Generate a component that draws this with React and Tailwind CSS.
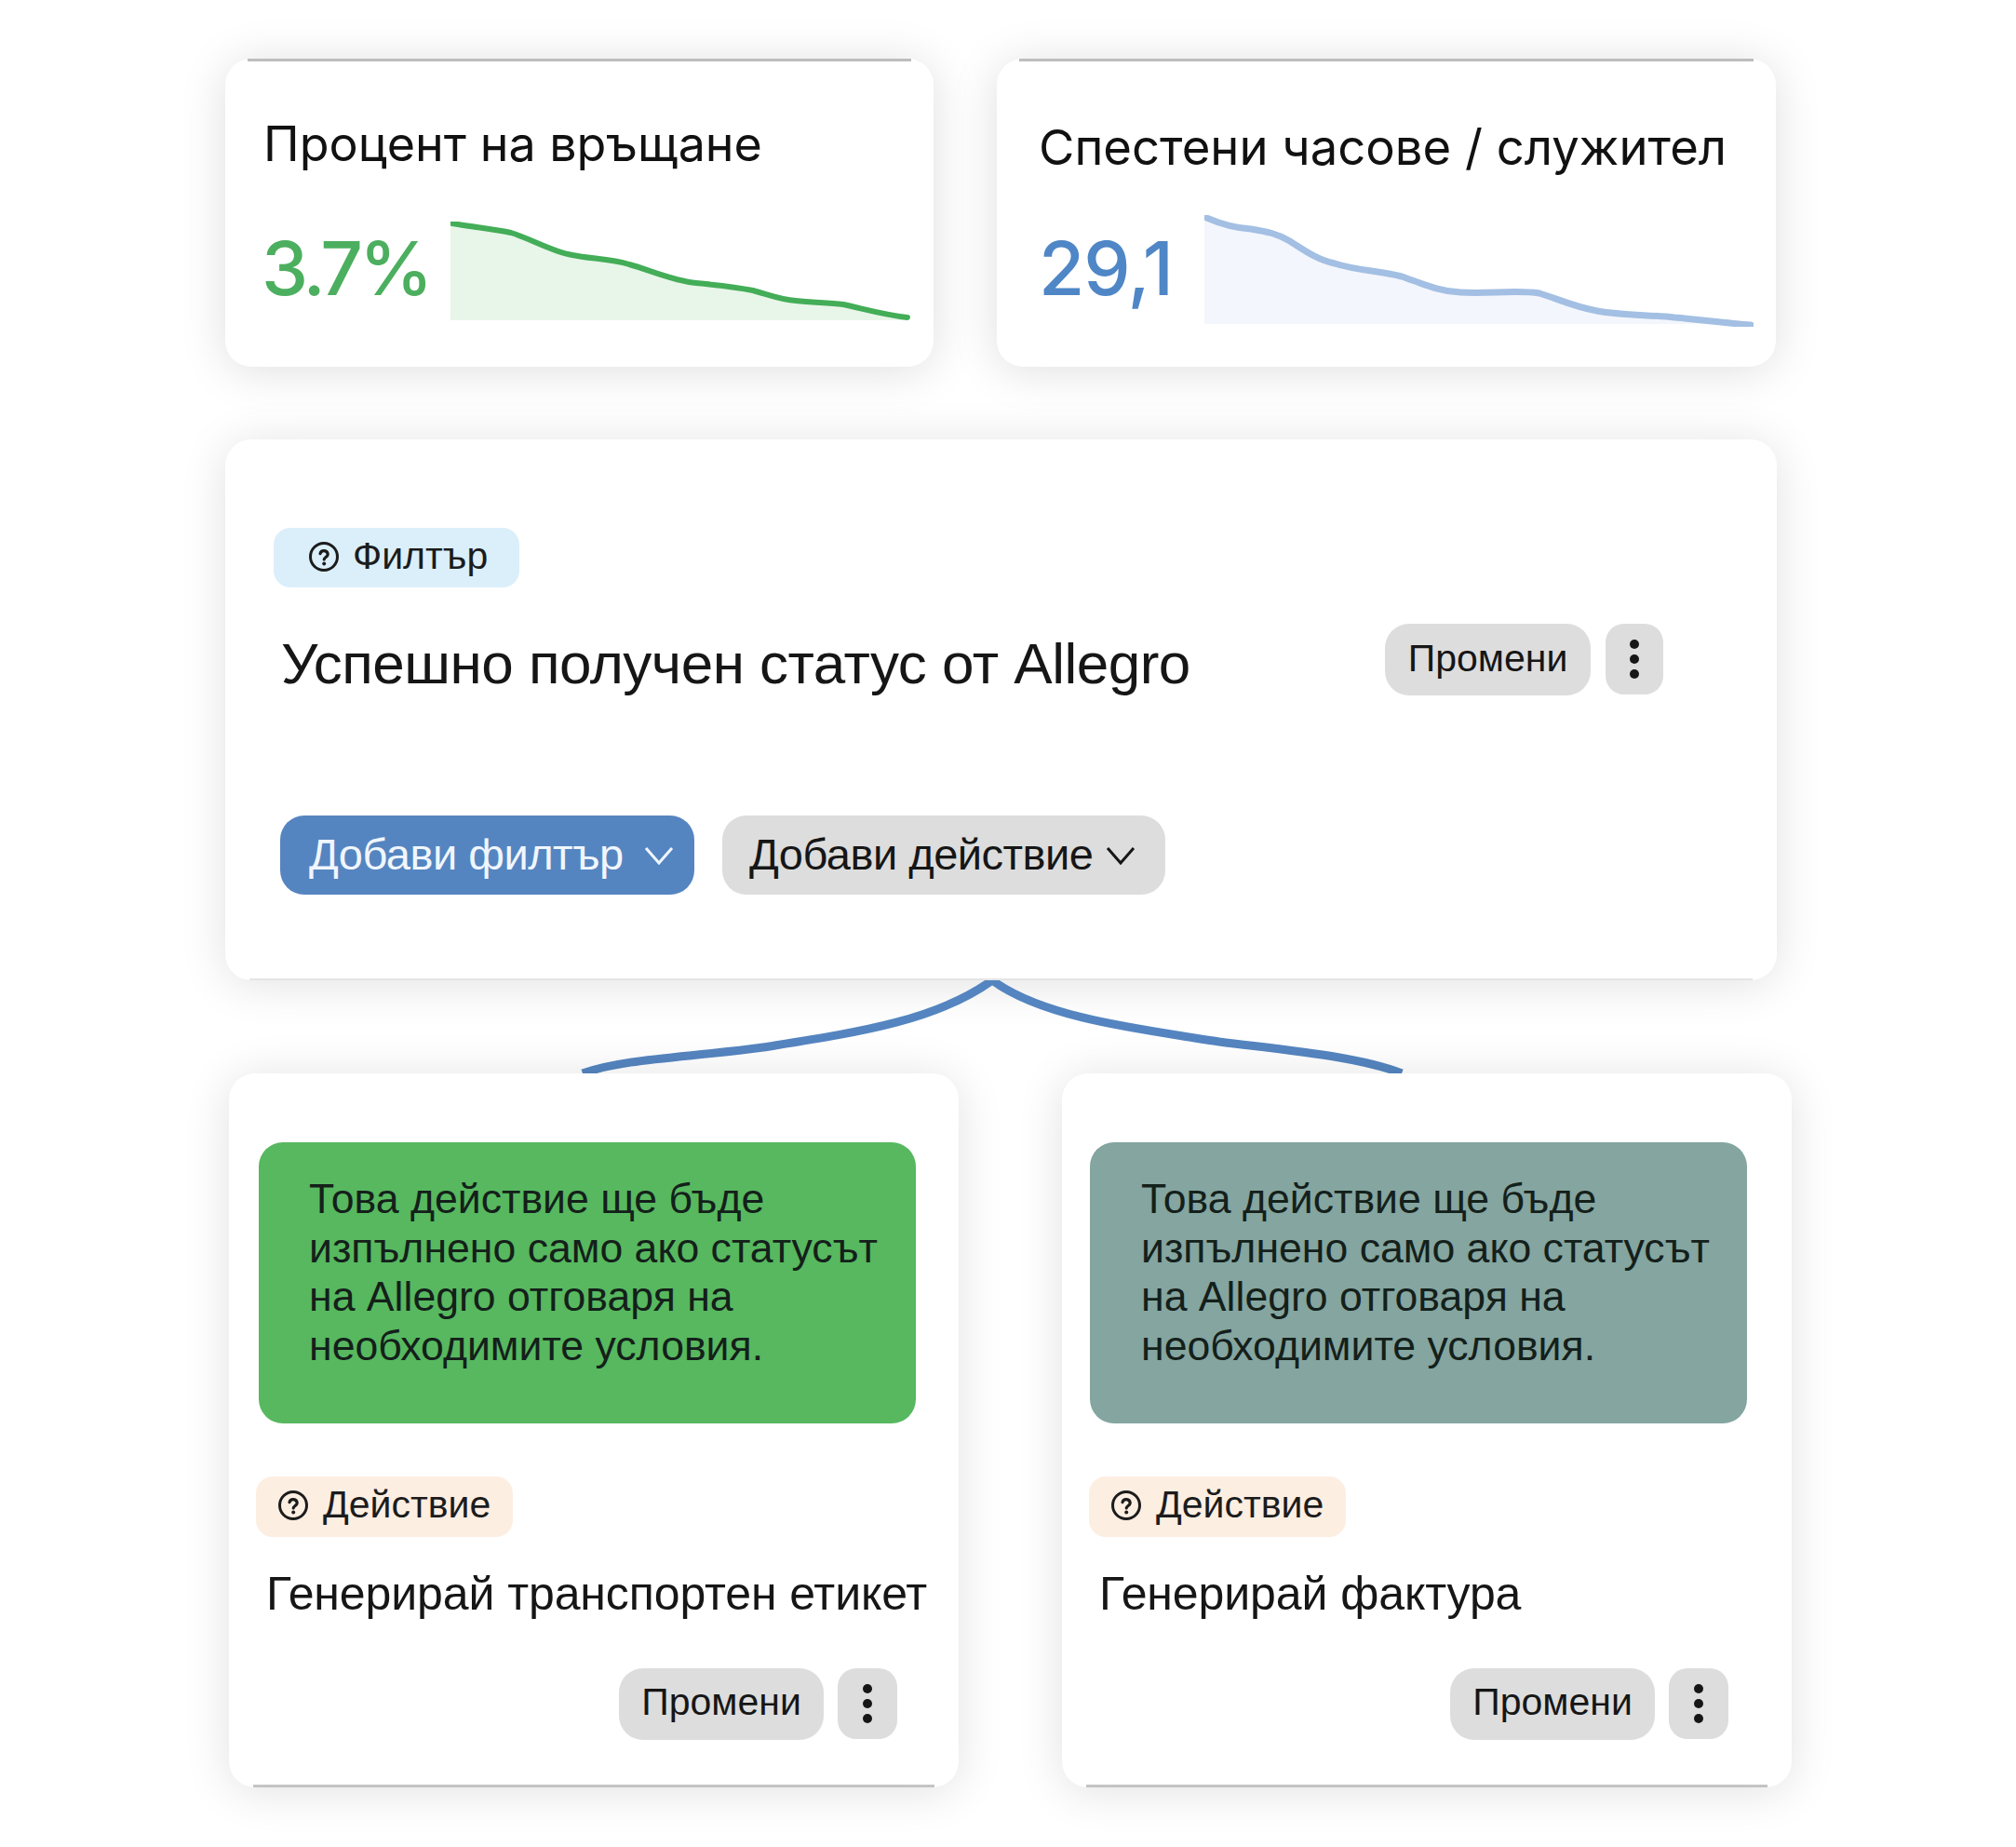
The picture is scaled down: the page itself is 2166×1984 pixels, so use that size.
import React from 'react';

const SANS = 'font-["Liberation_Sans",Arial,sans-serif]';

function HelpIcon() {
  return (
    <svg width="34" height="34" viewBox="0 0 34 34" className="shrink-0" fill="none">
      <circle cx="17" cy="17" r="14.5" stroke="#1c1c1c" strokeWidth="3" />
      <path d="M13 13.6a4.2 4.2 0 0 1 8.2 .8c0 2.8-4 3.2-4 5.6" stroke="#1c1c1c" strokeWidth="3.2" strokeLinecap="round" />
      <circle cx="17.2" cy="24.6" r="2" fill="#1c1c1c" />
    </svg>
  );
}

function Chevron({ color }) {
  return (
    <svg width="32" height="20" viewBox="0 0 32 20" className="shrink-0" fill="none">
      <path d="M2 2L16 18L30 2" stroke={color} strokeWidth="3" />
    </svg>
  );
}

function Kebab({ className }) {
  return (
    <div className={`flex flex-col items-center justify-center gap-[6px] bg-[#dddddd] rounded-[20px] ${className}`}>
      <span className="w-[10px] h-[10px] rounded-full bg-[#161616]" />
      <span className="w-[10px] h-[10px] rounded-full bg-[#161616]" />
      <span className="w-[10px] h-[10px] rounded-full bg-[#161616]" />
    </div>
  );
}

function Sparkline({ width, height, line, fill, stroke, d, area }) {
  return (
    <svg width={width} height={height} viewBox={`0 0 ${width} ${height}`} className="shrink-0 block">
      <path d={area} fill={fill} />
      <path d={d} fill="none" stroke={stroke} strokeWidth={line} strokeLinecap="round" strokeLinejoin="round" />
    </svg>
  );
}

function StatCard({ width, title, titleClass, value, valueClass, children, chartClass }) {
  return (
    <div className="h-[331px] bg-white rounded-[28px] shadow-[0_4px_50px_rgba(0,0,0,0.13)]" style={{ width }}>
      <div className="mx-[24px] h-[3px] bg-[#bdbdbd]" />
      <div className={titleClass}>{title}</div>
      <div className={`flex items-start ${chartClass}`}>
        <div className={valueClass}>{value}</div>
        {children}
      </div>
    </div>
  );
}

function ActionCard({ boxClass, title, actionsClass }) {
  return (
    <div className="flex flex-col w-[784px] h-[767px] bg-white rounded-[28px] shadow-[0_4px_50px_rgba(0,0,0,0.12)] pt-[74px]">
      <div className={`w-[706px] h-[302px] rounded-[26px] pt-[35px] text-[44.6px] leading-[52.5px] text-[#14201a] ${boxClass}`}>
        <div>Това действие ще бъде</div>
        <div>изпълнено само ако статусът</div>
        <div>на Allegro отговаря на</div>
        <div>необходимите условия.</div>
      </div>
      <div className="ml-[29px] mt-[57px] w-[276px] h-[65px] rounded-[18px] bg-[#fdeee2] flex items-center pl-[23px] pb-[3px] gap-[15px] text-[41px] text-[#1c1c1c]">
        <HelpIcon />
        <span>Действие</span>
      </div>
      <div className="ml-[40px] mt-[31px] h-[60px] text-[50px] leading-[60px] tracking-[-0.1px] text-[#161616]">{title}</div>
      <div className={`flex justify-end gap-[15px] mt-[50px] ${actionsClass}`}>
        <div className="w-[220px] h-[77px] rounded-[26px] bg-[#dddddd] flex items-center justify-center pb-[3px] text-[41px] text-[#161616]">Промени</div>
        <Kebab className="w-[64px] h-[76px]" />
      </div>
      <div className="mt-auto mx-[26px] h-[3px] bg-[#c4c4c4]" />
    </div>
  );
}

export default function App() {
  return (
    <div className={`w-[2166px] h-[1984px] overflow-hidden bg-white pt-[63px] ${SANS}`}>
      {/* Stats */}
      <div className="flex pl-[242px] gap-[68px]">
        <StatCard
          width={761}
          title="Процент на връщане"
          titleClass='pl-[41px] pt-[59px] h-[117px] font-["Inter",sans-serif] text-[52px] leading-[60px] text-[#111111]'
          value="3.7%"
          valueClass='w-[203px] -ml-[2px] pt-[5px] font-["Inter",sans-serif] font-medium text-[80px] leading-[90px] tracking-[-4px] text-[#4caf5f]'
          chartClass="pl-[41px] pt-[55px]"
        >
          <Sparkline
            width={494}
            height={108}
            line={6}
            stroke="#43ad57"
            fill="#e8f5e9"
            d="M2 2C25 6 48 8 65 12C88 19 108 32 131 36C150 40 172 40 192 46C214 52 240 64 264 66C285 68 305 70 325 74C340 78 355 84 371 85C390 87 405 87 422 89C445 94 465 100 491 103"
            area="M0 0C25 5 48 7 65 11C88 18 108 31 131 35C150 39 172 39 192 45C214 51 240 63 264 65C285 67 305 69 325 73C340 77 355 83 371 84C390 86 405 86 422 88C445 93 465 101 491 104L491 106L0 106Z"
          />
        </StatCard>
        <StatCard
          width={837}
          title="Спестени часове / служител"
          titleClass='pl-[45px] pt-[62px] h-[117px] font-["Inter",sans-serif] text-[52.6px] leading-[60px] text-[#111111]'
          value="29,1"
          valueClass='w-[178px] -ml-[3px] pt-[12px] font-["Inter",sans-serif] font-medium text-[80px] leading-[90px] tracking-[-1px] text-[#4f86c6]'
          chartClass="pl-[48px] pt-[48px]"
        >
          <Sparkline
            width={590}
            height={120}
            line={7}
            stroke="#a3bfe3"
            fill="#f3f6fc"
            d="M0 2C18 10 32 14 50 15C68 18 78 20 90 27C105 36 120 48 140 52C165 60 190 60 212 66C235 74 252 82 275 83C305 85 335 80 360 84C380 90 395 98 422 103C450 108 480 107 505 110C530 112 560 116 587 118"
            area="M0 0C18 8 32 12 50 13C68 16 78 18 90 25C105 34 120 46 140 50C165 58 190 58 212 64C235 72 252 80 275 81C305 83 335 78 360 82C380 88 395 96 422 101C450 106 480 105 505 108C530 110 545 114 560 117L0 117Z"
          />
        </StatCard>
      </div>

      {/* Filter card */}
      <div className="flex flex-col ml-[242px] mt-[78px] w-[1667px] h-[581px] bg-white rounded-[28px] shadow-[0_4px_50px_rgba(0,0,0,0.12)] pt-[95px]">
        <div className="ml-[52px] w-[264px] h-[64px] rounded-[18px] bg-[#dbeffa] flex items-center pl-[37px] pb-[2px] gap-[14px] text-[41px] text-[#1c1c1c]">
          <HelpIcon />
          <span>Филтър</span>
        </div>
        <div className="flex items-start justify-between pl-[60px] pr-[122px] mt-[39px]">
          <div className="pt-[7px] text-[62px] leading-[72px] tracking-[-0.5px] text-[#161616]">Успешно получен статус от Allegro</div>
          <div className="flex gap-[16px]">
            <div className="w-[221px] h-[77px] rounded-[26px] bg-[#dddddd] flex items-center justify-center pb-[2px] text-[41px] text-[#161616]">Промени</div>
            <Kebab className="w-[62px] h-[76px]" />
          </div>
        </div>
        <div className="flex gap-[30px] ml-[59px] mt-[127px]">
          <div className="w-[445px] h-[85px] rounded-[26px] bg-[#5585c0] flex items-center pl-[31px] gap-[22px] text-[47px] tracking-[-0.5px] text-[#f0f6fd]">
            <span>Добави филтър</span>
            <Chevron color="#f0f6fd" />
          </div>
          <div className="w-[476px] h-[85px] rounded-[26px] bg-[#dddddd] flex items-center pl-[29px] gap-[14px] text-[47px] tracking-[-0.5px] text-[#161616]">
            <span>Добави действие</span>
            <Chevron color="#161616" />
          </div>
        </div>
        <div className="mt-auto mx-[26px] h-[2px] bg-[#e4e4e4]" />
      </div>

      {/* Connector */}
      <svg width="900" height="100" viewBox="0 0 900 100" className="block ml-[620px]" fill="none">
        <path d="M446 0C385 44 300 56 200 72C120 83 50 84 6 100" stroke="#5585c0" strokeWidth="9" />
        <path d="M446 0C500 40 600 52 690 66C770 76 840 82 886 100" stroke="#5585c0" strokeWidth="9" />
      </svg>

      {/* Actions */}
      <div className="flex pl-[246px] gap-[111px]">
        <ActionCard boxClass="ml-[32px] pl-[54px] bg-[#57b85f]" actionsClass="pr-[66px]" title="Генерирай транспортен етикет" />
        <ActionCard boxClass="ml-[30px] pl-[55px] bg-[#84a5a0]" actionsClass="pr-[68px]" title="Генерирай фактура" />
      </div>
    </div>
  );
}
